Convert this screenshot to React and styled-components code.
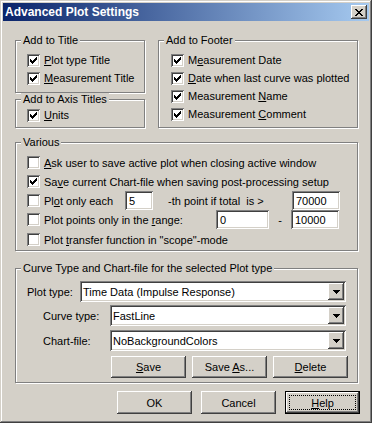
import React from "react";
import styled, { createGlobalStyle } from "styled-components";

// colours of the classic windows look
const FACE = "#D4D0C8";
const SHADOW = "#808080";
const DARK = "#404040";

const GlobalStyle = createGlobalStyle`
  html, body { margin: 0; padding: 0; background: ${FACE}; }
  body {
    font-family: Tahoma, "Liberation Sans", Arial, sans-serif;
    font-size: 11px;
    color: #000;
  }
`;

const raised = `
  box-shadow: inset -1px -1px ${DARK}, inset 1px 1px #fff,
    inset -2px -2px ${SHADOW}, inset 2px 2px ${FACE};
`;
const sunken = `
  box-shadow: inset 1px 1px ${SHADOW}, inset -1px -1px #fff,
    inset 2px 2px ${DARK}, inset -2px -2px ${FACE};
`;

const Window = styled.div`
  width: 372px;
  height: 423px;
  box-sizing: border-box;
  padding: 3px;
  background: ${FACE};
  box-shadow: inset -1px -1px ${DARK}, inset 1px 1px ${FACE},
    inset -2px -2px ${SHADOW}, inset 2px 2px #fff;
  display: flex;
  flex-direction: column;
`;

const TitleBar = styled.div`
  height: 18px;
  display: flex;
  align-items: center;
  justify-content: space-between;
  padding: 0 2px;
  background: linear-gradient(to right, #0a246a, #a6caf0);
  color: #fff;
  font-weight: bold;
  font-size: 12px;
`;

const CloseButton = styled.div`
  width: 16px;
  height: 14px;
  background: ${FACE};
  ${raised}
  display: flex;
  align-items: center;
  justify-content: center;
`;

const Body = styled.div`
  padding: 19px 11px 0 12px;
  display: flex;
  flex-direction: column;
`;

const TopGrid = styled.div`
  display: grid;
  grid-template-columns: 130px 200px;
  column-gap: 13px;
  align-items: start;
`;

const Column = styled.div`
  display: flex;
  flex-direction: column;
  gap: 6px;
`;

const Group = styled.div`
  position: relative;
  border: 1px solid ${SHADOW};
  box-shadow: 1px 1px 0 #fff, inset 1px 1px 0 #fff;
  padding: ${(p) => p.$pad || "10px 10px 5px 11px"};
  margin-top: ${(p) => p.$top || 0}px;
  display: flex;
  flex-direction: column;
`;

const Legend = styled.span`
  position: absolute;
  top: -7px;
  left: 5px;
  padding: 0 2px;
  line-height: 13px;
  background: ${FACE};
`;

const Row = styled.div`
  height: ${(p) => p.$h || 18}px;
  margin-top: ${(p) => p.$mt || 0}px;
  display: flex;
  align-items: center;
`;

const CheckLabel = styled.label`
  display: flex;
  align-items: center;
  gap: 4px;
  white-space: nowrap;
  width: ${(p) => (p.$w ? `${p.$w}px` : "auto")};
  flex-shrink: 0;
`;

const Box = styled.span`
  width: 13px;
  height: 13px;
  flex-shrink: 0;
  background: #fff;
  ${sunken}
  display: block;
`;

const Key = styled.span`
  text-decoration: underline;
`;

const Field = styled.div`
  width: ${(p) => p.$w}px;
  height: 19px;
  box-sizing: border-box;
  padding: 0 2px 0 4px;
  background: #fff;
  ${sunken}
  display: flex;
  align-items: center;
  flex-shrink: 0;
`;

const Text = styled.span`
  white-space: pre;
  flex: ${(p) => (p.$grow ? 1 : "none")};
  padding-left: ${(p) => p.$pl || 0}px;
  width: ${(p) => (p.$w ? `${p.$w}px` : "auto")};
  text-align: ${(p) => p.$align || "left"};
`;

const ComboRow = styled.div`
  display: flex;
  align-items: center;
  padding-left: ${(p) => p.$indent}px;
  margin-bottom: ${(p) => p.$mb}px;
`;

const ComboLabel = styled.span`
  width: ${(p) => p.$w}px;
  flex-shrink: 0;
`;

const Combo = styled.div`
  flex: 1;
  height: 21px;
  box-sizing: border-box;
  padding: 2px;
  background: #fff;
  ${sunken}
  display: flex;
  align-items: stretch;
`;

const ComboValue = styled.span`
  flex: 1;
  padding-left: 1px;
  display: flex;
  align-items: center;
`;

const DropButton = styled.span`
  width: 16px;
  background: ${FACE};
  ${raised}
  display: flex;
  align-items: center;
  justify-content: center;
`;

const ButtonRow = styled.div`
  display: flex;
  justify-content: flex-end;
  gap: ${(p) => p.$gap}px;
  margin: ${(p) => p.$margin};
`;

const Button = styled.div`
  position: relative;
  width: 75px;
  height: ${(p) => p.$h || 23}px;
  box-sizing: border-box;
  background: ${FACE};
  ${raised}
  display: flex;
  align-items: center;
  justify-content: center;
  ${(p) =>
    p.$default &&
    `
    border: 1px solid #000;
    &::after {
      content: "";
      position: absolute;
      inset: 3px;
      border: 1px dotted #000;
    }
  `}
`;

const CheckMark = () => (
  <svg width="13" height="13" viewBox="0 0 13 13" shapeRendering="crispEdges">
    {[
      [3, 5],
      [4, 6],
      [5, 7],
      [6, 6],
      [7, 5],
      [8, 4],
      [9, 3],
    ].map(([x, y]) => (
      <rect key={x} x={x} y={y} width="1" height="3" fill="#000" />
    ))}
  </svg>
);

const CloseGlyph = () => (
  <svg width="8" height="7" viewBox="0 0 8 7" shapeRendering="crispEdges">
    {[
      [0, 0], [6, 0], [1, 1], [5, 1], [2, 2], [4, 2], [3, 3],
      [2, 4], [4, 4], [1, 5], [5, 5], [0, 6], [6, 6],
    ].map(([x, y], i) => (
      <rect key={i} x={x} y={y} width="2" height="1" fill="#000" />
    ))}
  </svg>
);

const Arrow = () => (
  <svg width="7" height="4" viewBox="0 0 7 4" shapeRendering="crispEdges">
    <rect x="0" y="0" width="7" height="1" fill="#000" />
    <rect x="1" y="1" width="5" height="1" fill="#000" />
    <rect x="2" y="2" width="3" height="1" fill="#000" />
    <rect x="3" y="3" width="1" height="1" fill="#000" />
  </svg>
);

const Check = ({ checked, children, width }) => (
  <CheckLabel $w={width}>
    <Box>{checked && <CheckMark />}</Box>
    <span>{children}</span>
  </CheckLabel>
);

const ComboBox = ({ value }) => (
  <Combo>
    <ComboValue>{value}</ComboValue>
    <DropButton>
      <Arrow />
    </DropButton>
  </Combo>
);

export default function App() {
  return (
    <>
      <GlobalStyle />
      <Window>
        <TitleBar>
          <span>Advanced Plot Settings</span>
          <CloseButton>
            <CloseGlyph />
          </CloseButton>
        </TitleBar>

        <Body>
          <TopGrid>
            <Column>
              <Group $pad="10px 10px 5px 11px">
                <Legend>Add to Title</Legend>
                <Row>
                  <Check checked>
                    <Key>P</Key>lot type Title
                  </Check>
                </Row>
                <Row>
                  <Check checked>
                    <Key>M</Key>easurement Title
                  </Check>
                </Row>
              </Group>
              <Group $pad="6px 10px 3px 11px">
                <Legend>Add to Axis Titles</Legend>
                <Row>
                  <Check checked>
                    <Key>U</Key>nits
                  </Check>
                </Row>
              </Group>
            </Column>

            <Group $pad="10px 10px 4px 12px">
              <Legend>Add to Footer</Legend>
              <Row>
                <Check checked>
                  M<Key>e</Key>asurement Date
                </Check>
              </Row>
              <Row>
                <Check checked>
                  <Key>D</Key>ate when last curve was plotted
                </Check>
              </Row>
              <Row>
                <Check checked>
                  Measurement <Key>N</Key>ame
                </Check>
              </Row>
              <Row>
                <Check checked>
                  Measurement <Key>C</Key>omment
                </Check>
              </Row>
            </Group>
          </TopGrid>

          <Group $top={14} $pad="10px 17px 1px 11px">
            <Legend>Various</Legend>
            <Row $h={19}>
              <Check>
                <Key>A</Key>sk user to save active plot when closing active window
              </Check>
            </Row>
            <Row $h={19}>
              <Check checked>
                Sa<Key>v</Key>e current Chart-file when saving post-processing setup
              </Check>
            </Row>
            <Row $h={19}>
              <Check width={98}>
                Pl<Key>o</Key>t only each
              </Check>
              <Field $w={28}>5</Field>
              <Text $grow $pl={15}>-th point if total  is &gt;</Text>
              <Field $w={48}>70000</Field>
            </Row>
            <Row $h={19}>
              <Check width={189}>
                Plot points only in the <Key>r</Key>ange:
              </Check>
              <Field $w={53}>0</Field>
              <Text $w={22} $align="center">-</Text>
              <Field $w={48}>10000</Field>
            </Row>
            <Row $h={19} $mt={1}>
              <Check>
                Plot <Key>t</Key>ransfer function in "scope"-mode
              </Check>
            </Row>
          </Group>

          <Group $top={17} $pad="12px 11px 4px 11px">
            <Legend>Curve Type and Chart-file for the selected Plot type</Legend>
            <ComboRow $indent={0} $mb={3}>
              <ComboLabel $w={53}>Plot type:</ComboLabel>
              <ComboBox value="Time Data (Impulse Response)" />
            </ComboRow>
            <ComboRow $indent={16} $mb={4}>
              <ComboLabel $w={67}>Curve type:</ComboLabel>
              <ComboBox value="FastLine" />
            </ComboRow>
            <ComboRow $indent={16} $mb={5}>
              <ComboLabel $w={67}>Chart-file:</ComboLabel>
              <ComboBox value="NoBackgroundColors" />
            </ComboRow>
            <ButtonRow $gap={6} $margin="0 -2px 0 0">
              <Button $h={22}>
                <span>
                  <Key>S</Key>ave
                </span>
              </Button>
              <Button $h={22}>
                <span>
                  Save <Key>A</Key>s...
                </span>
              </Button>
              <Button $h={22}>
                <span>
                  <Key>D</Key>elete
                </span>
              </Button>
            </ButtonRow>
          </Group>

          <ButtonRow $gap={9} $margin="8px -2px 0 0">
            <Button>OK</Button>
            <Button>Cancel</Button>
            <Button $default>
              <span>
                <Key>H</Key>elp
              </span>
            </Button>
          </ButtonRow>
        </Body>
      </Window>
    </>
  );
}
